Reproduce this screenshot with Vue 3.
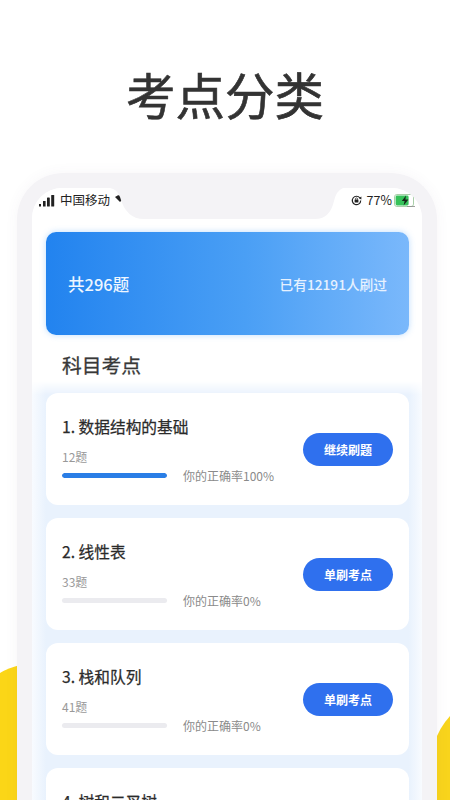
<script setup>
const items = [
  { title: '1. 数据结构的基础', count: '12题', rate: 100, btn: '继续刷题' },
  { title: '2. 线性表', count: '33题', rate: 0, btn: '单刷考点' },
  { title: '3. 栈和队列', count: '41题', rate: 0, btn: '单刷考点' },
  { title: '4. 树和二叉树', count: '52题', rate: 0, btn: '单刷考点' }
]
</script>

<template>
  <div class="page">
    <svg class="blob blob-left" width="20" height="140" viewBox="0 0 20 140">
      <path d="M0 8 Q8 3 20 0 V140 H0 Z" fill="#fbd617" />
    </svg>
    <svg class="blob blob-right" width="16" height="90" viewBox="0 0 16 90">
      <path d="M0 31 Q5 15 16 3 V90 H0 Z" fill="#f8d41c" />
    </svg>

    <h1 class="headline">考点分类</h1>

    <div class="phone">
      <div class="screen">
        <div class="status">
          <div class="status-left">
            <svg width="17" height="13" viewBox="0 0 17 13">
              <rect x="1" y="10" width="2" height="2.5" fill="#222" />
              <rect x="5" y="7" width="2.6" height="5.5" fill="#222" />
              <rect x="9" y="3.5" width="2.8" height="9" rx=".6" fill="#222" />
              <rect x="13.2" y="1" width="3" height="11.5" rx=".6" fill="#222" />
            </svg>
            <span>中国移动</span>
            <svg class="wifi" width="10" height="9" viewBox="0 0 10 9">
              <path d="M0 3 Q5 -1 10 3 L5 8 Z" fill="#222" />
            </svg>
          </div>
          <div class="status-right">
            <svg width="11" height="11" viewBox="0 0 11 11">
              <path d="M8.9 3 A4.2 4.2 0 1 0 9.7 5.5" fill="none" stroke="#222" stroke-width="1.2" />
              <path d="M7.8 3.2 L10.4 1.6 L10.4 4.6 Z" fill="#222" />
              <rect x="3.6" y="4.6" width="3.8" height="3" rx=".5" fill="#222" />
              <path d="M4.4 4.8 V4 A1.1 1.1 0 0 1 6.6 4 V4.8" fill="none" stroke="#222" stroke-width=".7" />
            </svg>
            <span>77%</span>
            <svg class="battery" width="21" height="13" viewBox="0 0 21 13">
              <rect x=".5" y=".5" width="19" height="12" rx="2.4" fill="#fff" stroke="#a9cfa9" />
              <rect x="1.6" y="1.6" width="13" height="9.8" rx="1.4" fill="#36c25a" />
              <path d="M12 1.5 L7.8 7 H10.6 L9.6 11.5 L14.4 5.6 H11.4 Z" fill="#16261a" />
              <rect x="13" y="12" width="8" height=".8" fill="#8a8a8a" />
            </svg>
          </div>
        </div>
        <svg class="notch" width="390" height="31" viewBox="0 0 390 31">
          <path d="M78 0 Q85 1 88 9 Q94 31 112 31 H283 Q298 31 302 13 Q304 3 311 0 Z" fill="#f4f3f6" />
        </svg>

        <div class="banner">
          <span class="banner-total">共296题</span>
          <span class="banner-done">已有12191人刷过</span>
        </div>

        <h2 class="section">科目考点</h2>

        <div class="list">
          <div v-for="item in items" :key="item.title" class="card">
            <div class="info">
              <div class="title">{{ item.title }}</div>
              <div class="count">{{ item.count }}</div>
              <div class="progress-row">
                <div class="track">
                  <div class="fill" :style="{ width: item.rate + '%' }"></div>
                </div>
                <span class="rate">你的正确率{{ item.rate }}%</span>
              </div>
            </div>
            <div class="btn">{{ item.btn }}</div>
          </div>
        </div>
      </div>
    </div>
  </div>
</template>

<style scoped>
.page {
  position: relative;
  width: 450px;
  height: 800px;
  overflow: hidden;
  background: #fff;
  font-family: "Noto Sans CJK SC", "Noto Sans", sans-serif;
  color: #222;
}
.blob {
  position: absolute;
  display: block;
}
.blob-left {
  left: 0;
  top: 665px;
}
.blob-right {
  right: 0;
  top: 713px;
}
.headline {
  margin: 0;
  height: 173px;
  padding-top: 57px;
  box-sizing: border-box;
  text-align: center;
  font-size: 49.5px;
  line-height: 74px;
  font-weight: 400;
  -webkit-text-stroke: 0.6px #333;
  color: #333;
}
.phone {
  position: relative;
  box-sizing: border-box;
  width: 420px;
  height: 720px;
  margin-left: 17px;
  border: 15px solid #f4f3f6;
  border-bottom: 0;
  border-radius: 46px 46px 0 0;
  box-shadow: 0 0 14px rgba(90, 80, 120, 0.05);
}
.screen {
  position: relative;
  height: 100%;
  background: #fff;
  border-radius: 30px 30px 0 0;
  overflow: hidden;
}
.notch {
  position: absolute;
  left: 0;
  top: 0;
  display: block;
}
.status {
  display: flex;
  justify-content: space-between;
  align-items: center;
  height: 44px;
  padding: 0 7px 20px 6px;
  box-sizing: border-box;
  font-size: 12.5px;
  line-height: 24px;
  color: #222;
}
.status-left {
  display: flex;
  align-items: center;
  gap: 5px;
}
.status-right {
  display: flex;
  align-items: center;
  gap: 5px;
}
.status-right span {
  margin-right: -3px;
}
.wifi {
  margin-top: -3px;
}
.battery {
  margin-top: 1px;
}
.banner {
  display: flex;
  justify-content: space-between;
  align-items: center;
  height: 103px;
  margin: 0 13px 0 14px;
  padding: 0 22px;
  box-sizing: border-box;
  border-radius: 10px;
  background: linear-gradient(90deg, #2283ef 0%, #4a9ff5 55%, #7ab8fb 100%);
  box-shadow: 0 0 6px rgba(110, 180, 250, 0.45);
  color: #fff;
}
.banner-total {
  font-size: 16.5px;
  font-weight: 500;
  color: #eef6ff;
}
.banner-done {
  font-size: 13.7px;
  font-weight: 500;
  color: #e6f1ff;
}
.section {
  margin: 0;
  height: 58px;
  padding-left: 30px;
  font-size: 19.8px;
  line-height: 60px;
  font-weight: 400;
  -webkit-text-stroke: 0.3px #383838;
  color: #383838;
}
.list {
  position: relative;
  display: flex;
  flex-direction: column;
  gap: 13px;
  padding: 0 13px 0 14px;
}
.list::before {
  content: "";
  position: absolute;
  left: 0;
  right: 0;
  top: -12px;
  bottom: 0;
  background: linear-gradient(90deg, #f8fbff 0, #e9f2fd 14px, #e9f2fd calc(100% - 13px), #f8fbff 100%);
  -webkit-mask-image: linear-gradient(180deg, transparent 0, #000 14px);
  mask-image: linear-gradient(180deg, transparent 0, #000 14px);
}
.card {
  position: relative;
  display: flex;
  align-items: center;
  justify-content: space-between;
  flex: none;
  box-sizing: border-box;
  height: 112px;
  padding: 0 16px;
  border-radius: 12px;
  background: #fff;
}
.info {
  width: 212px;
  padding-top: 2px;
}
.title {
  font-size: 15.7px;
  font-weight: 400;
  -webkit-text-stroke: 0.25px #2a2a2a;
  line-height: 24px;
  color: #2a2a2a;
}
.count {
  margin-top: 9px;
  font-size: 12px;
  line-height: 18px;
  color: #999;
}
.progress-row {
  display: flex;
  align-items: center;
  gap: 16px;
  height: 20px;
  margin-top: 0;
}
.track {
  flex: none;
  width: 105px;
  height: 5px;
  border-radius: 3px;
  background: #ebebef;
  overflow: hidden;
}
.fill {
  height: 100%;
  border-radius: 3px;
  background: #2a7ee6;
}
.rate {
  font-size: 12px;
  line-height: 18px;
  color: #8a8a8a;
  white-space: nowrap;
}
.btn {
  flex: none;
  width: 90px;
  height: 33px;
  border-radius: 17px;
  background: #2f70ee;
  color: #fff;
  font-size: 12px;
  font-weight: 700;
  line-height: 33px;
  text-align: center;
}
</style>
